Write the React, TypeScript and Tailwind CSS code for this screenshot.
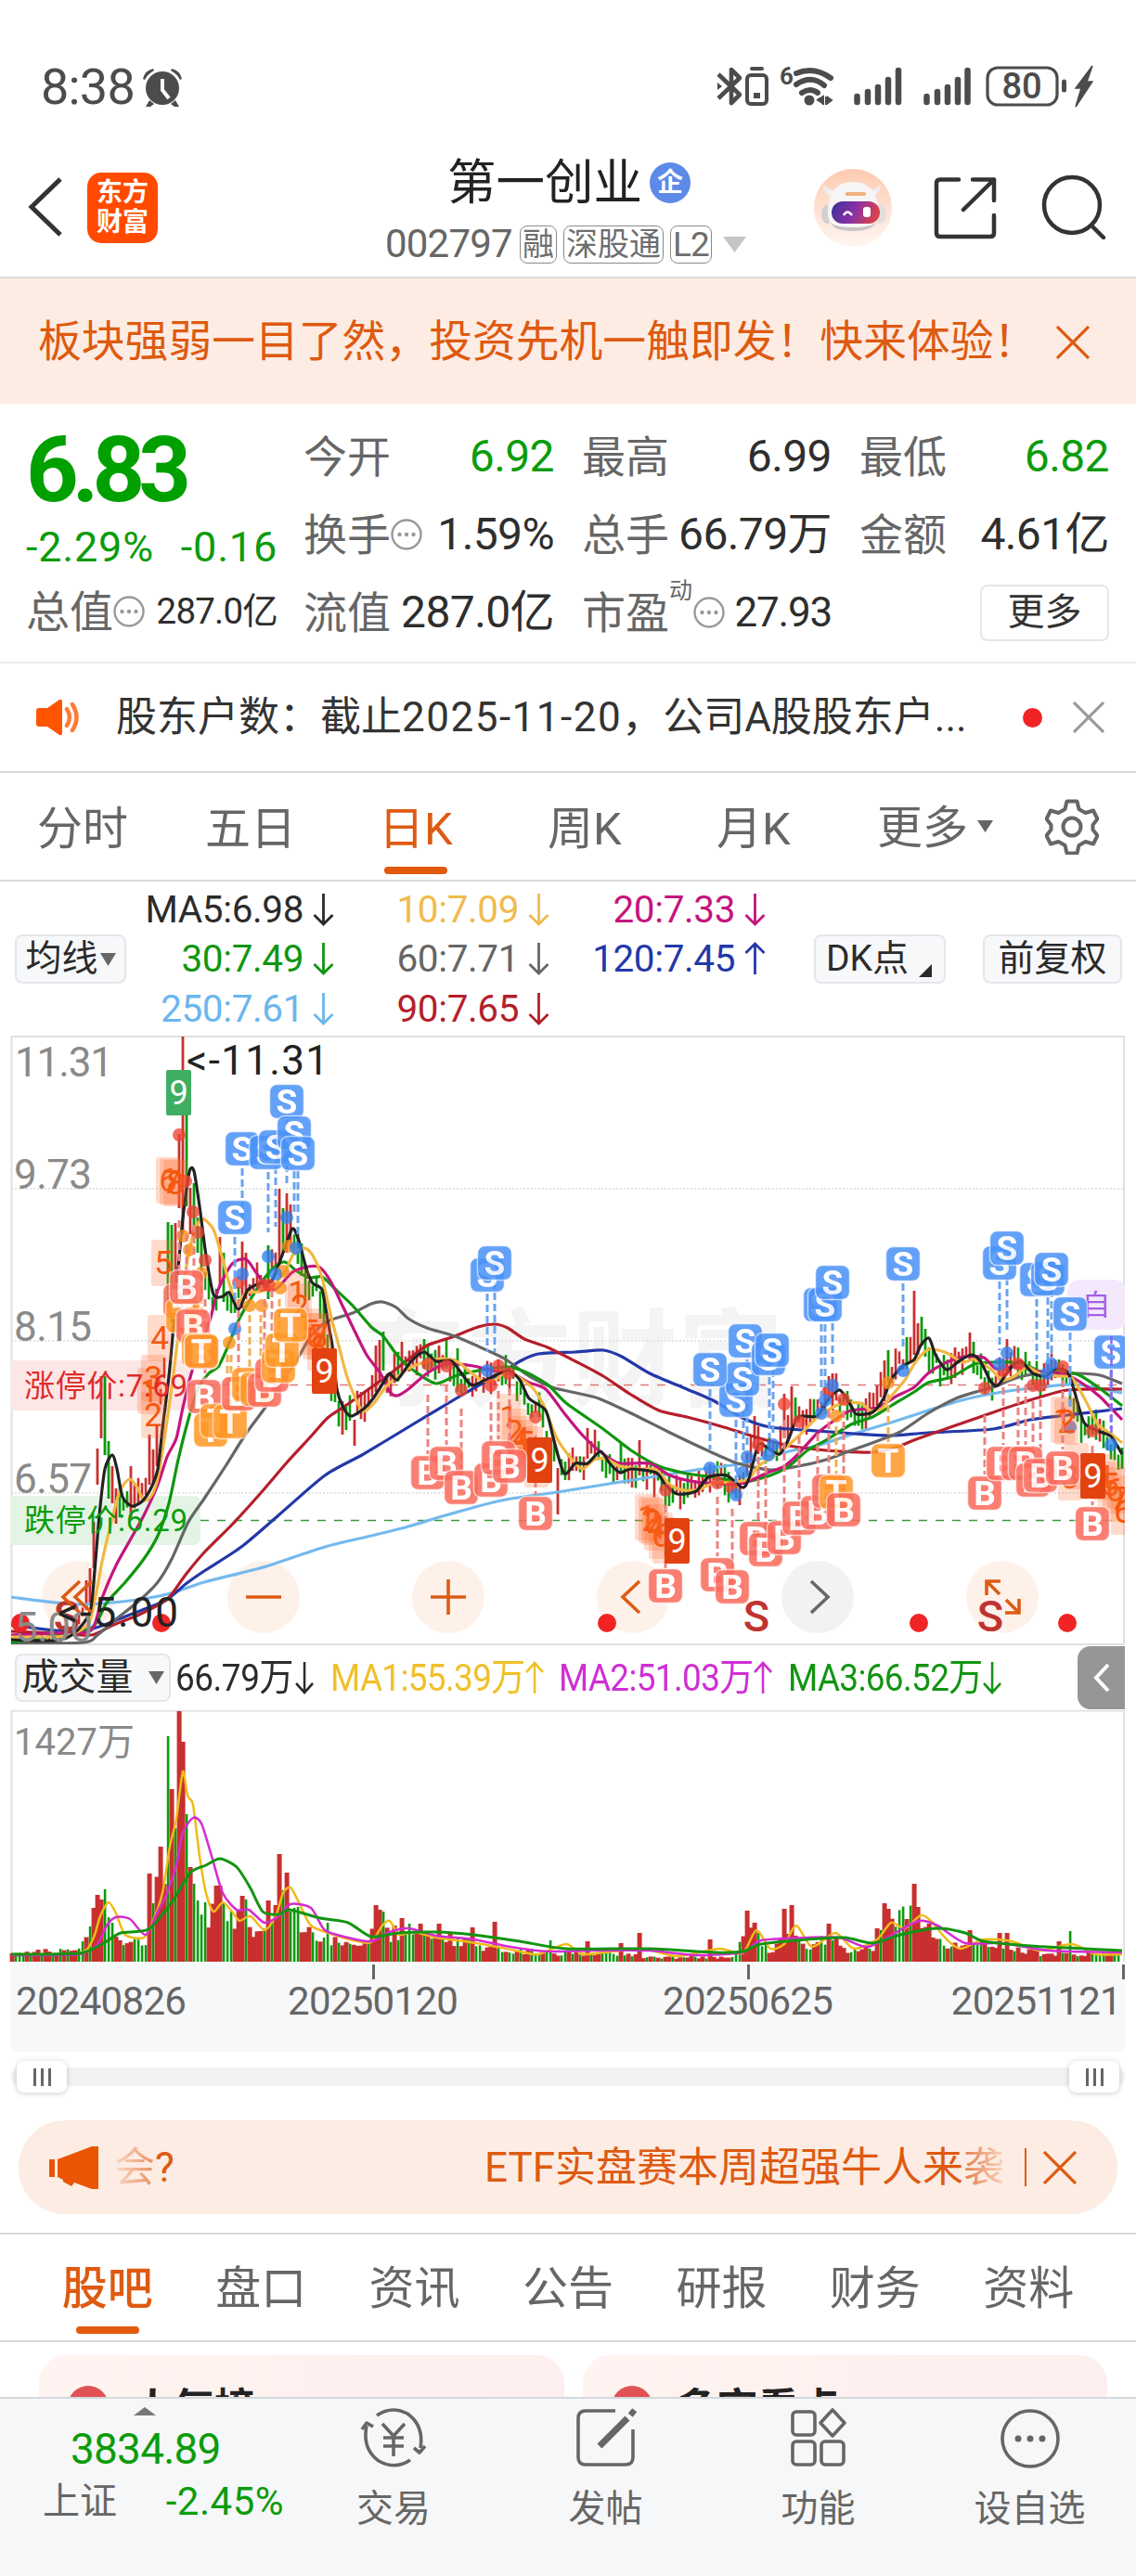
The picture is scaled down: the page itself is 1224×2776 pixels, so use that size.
import type { ReactNode } from "react";

type Point = [number, number];

interface MarkerProps {
  x: number;
  y: number;
  kind: "S" | "B" | "T";
}

const GREEN = "#0a9a0a";
const RED = "#c8302f";

const toPath = (points: Point[]) => {
  // Catmull-Rom smoothing, kept tight so that peaks stay sharp
  let d = `M${points[0][0]} ${points[0][1]}`;
  for (let i = 0; i < points.length - 1; i++) {
    const p0 = points[i - 1] ?? points[i];
    const p1 = points[i];
    const p2 = points[i + 1];
    const p3 = points[i + 2] ?? p2;
    const k = 8;
    d += ` C${p1[0] + (p2[0] - p0[0]) / k} ${p1[1] + (p2[1] - p0[1]) / k} ${
      p2[0] - (p3[0] - p1[0]) / k
    } ${p2[1] - (p3[1] - p1[1]) / k} ${p2[0]} ${p2[1]}`;
  }
  return d;
};

const valueAt = (points: Point[], x: number) => {
  for (let i = 0; i < points.length - 1; i++) {
    const [x1, y1] = points[i];
    const [x2, y2] = points[i + 1];
    if (x >= x1 && x <= x2) {
      return y1 + ((y2 - y1) * (x - x1)) / (x2 - x1 || 1);
    }
  }
  return points[points.length - 1][1];
};

const noise = (n: number) => {
  const v = Math.sin(n * 127.1 + 11.7) * 43758.5453;
  return v - Math.floor(v);
};

/* ---------- price data ---------- */

const ma5: Point[] = [
  [12, 1767], [60, 1768], [80, 1760], [97, 1737], [102, 1693], [107, 1633], [113, 1583], [121, 1568],
  [126, 1583], [132, 1613], [142, 1623], [153, 1618], [163, 1603], [170, 1583], [175, 1540], [182, 1483],
  [186, 1440], [192, 1367], [197, 1313], [204, 1263], [209, 1262], [215, 1300], [222, 1353], [230, 1395],
  [240, 1397], [247, 1393], [257, 1411], [267, 1390], [280, 1383], [293, 1380], [305, 1350], [315, 1324],
  [322, 1337], [330, 1367], [337, 1383], [347, 1390], [353, 1423], [358, 1450], [363, 1497], [370, 1517],
  [378, 1526], [392, 1518], [402, 1507], [413, 1490], [420, 1480], [428, 1487], [443, 1467], [457, 1457],
  [470, 1467], [487, 1467], [507, 1492], [523, 1487], [547, 1477], [560, 1487], [570, 1507], [588, 1520],
  [597, 1553], [608, 1588], [620, 1577], [633, 1577], [647, 1564], [657, 1577], [668, 1587], [680, 1583],
  [707, 1587], [717, 1600], [730, 1610], [750, 1607], [763, 1592], [783, 1590], [800, 1603], [807, 1593],
  [817, 1557], [827, 1560], [840, 1567], [850, 1550], [860, 1527], [880, 1526], [893, 1507], [905, 1498],
  [917, 1515], [923, 1524], [940, 1522], [952, 1507], [960, 1487], [973, 1472], [985, 1465], [992, 1450],
  [1001, 1442], [1008, 1460], [1020, 1476], [1033, 1467], [1047, 1460], [1057, 1468], [1067, 1488],
  [1075, 1493], [1090, 1473], [1100, 1467], [1113, 1480], [1127, 1483], [1137, 1475], [1150, 1478],
  [1157, 1497], [1168, 1533], [1183, 1542], [1197, 1548], [1209, 1567],
];

const ma10: Point[] = [
  [12, 1764], [70, 1763], [95, 1750], [103, 1720], [110, 1683], [120, 1640], [128, 1610], [133, 1600],
  [140, 1594], [148, 1603], [155, 1617], [163, 1612], [170, 1593], [178, 1545], [187, 1480], [193, 1430],
  [200, 1370], [208, 1330], [214, 1317], [220, 1314], [230, 1325], [238, 1350], [247, 1383], [255, 1405],
  [265, 1393], [280, 1392], [295, 1385], [307, 1370], [317, 1350], [328, 1345], [337, 1353], [347, 1377],
  [357, 1420], [365, 1450], [375, 1487], [390, 1520], [402, 1513], [417, 1493], [440, 1475], [457, 1468],
  [475, 1464], [492, 1467], [505, 1477], [520, 1488], [533, 1487], [547, 1478], [563, 1487], [575, 1497],
  [587, 1517], [600, 1550], [618, 1575], [628, 1583], [640, 1573], [653, 1572], [668, 1580], [690, 1583],
  [707, 1584], [722, 1600], [738, 1606], [753, 1605], [770, 1598], [790, 1597], [807, 1594], [817, 1580],
  [840, 1565], [860, 1548], [880, 1528], [900, 1515], [910, 1512], [927, 1512], [938, 1520], [950, 1518],
  [960, 1505], [975, 1487], [987, 1467], [1001, 1454], [1020, 1458], [1037, 1468], [1050, 1465],
  [1067, 1475], [1080, 1487], [1093, 1483], [1107, 1473], [1120, 1480], [1140, 1483], [1155, 1485],
  [1170, 1510], [1183, 1535], [1197, 1545], [1209, 1555],
];

const ma20: Point[] = [
  [12, 1762], [60, 1760], [98, 1757], [110, 1722], [125, 1687], [140, 1660], [155, 1633], [170, 1600],
  [180, 1570], [190, 1550], [197, 1517], [207, 1477], [220, 1440], [227, 1420], [235, 1390], [250, 1362],
  [265, 1357], [275, 1370], [290, 1390], [300, 1387], [315, 1371], [332, 1365], [345, 1366], [357, 1382],
  [368, 1405], [380, 1430], [395, 1460], [410, 1480], [420, 1500], [428, 1504], [440, 1497], [460, 1480],
  [480, 1470], [510, 1472], [530, 1477], [555, 1482], [570, 1490], [588, 1497], [608, 1523], [628, 1547],
  [650, 1567], [668, 1577], [700, 1577], [722, 1590], [750, 1597], [780, 1599], [802, 1598], [825, 1588],
  [845, 1580], [860, 1567], [880, 1545], [900, 1530], [917, 1520], [945, 1517], [965, 1505], [985, 1495],
  [1000, 1480], [1020, 1468], [1040, 1462], [1060, 1463], [1073, 1475], [1090, 1473], [1110, 1475],
  [1127, 1480], [1145, 1480], [1165, 1490], [1185, 1505], [1209, 1530],
];

const ma30: Point[] = [
  [12, 1770], [50, 1764], [98, 1755], [115, 1727], [135, 1705], [155, 1680], [170, 1655], [182, 1620],
  [192, 1573], [202, 1533], [213, 1497], [225, 1480], [235, 1473], [243, 1457], [257, 1423], [270, 1400],
  [283, 1380], [295, 1366], [307, 1360], [320, 1370], [333, 1377], [347, 1376], [360, 1388], [380, 1407],
  [400, 1430], [413, 1440], [430, 1463], [450, 1480], [470, 1491], [490, 1483], [510, 1478], [545, 1473],
  [565, 1478], [590, 1492], [610, 1512], [650, 1540], [680, 1563], [710, 1580], [740, 1588], [770, 1592],
  [800, 1597], [830, 1590], [850, 1580], [870, 1563], [890, 1552], [917, 1535], [940, 1527], [960, 1515],
  [985, 1500], [1000, 1490], [1025, 1484], [1050, 1470], [1070, 1468], [1090, 1468], [1110, 1473],
  [1125, 1480], [1145, 1478], [1165, 1483], [1190, 1500], [1209, 1515],
];

const ma60: Point[] = [
  [12, 1771], [90, 1770], [105, 1762], [125, 1745], [150, 1725], [170, 1705], [185, 1680], [203, 1640],
  [220, 1615], [243, 1580], [265, 1545], [287, 1515], [320, 1465], [335, 1440], [353, 1424], [380, 1415],
  [400, 1405], [412, 1403], [427, 1409], [440, 1421], [460, 1431], [490, 1440], [520, 1453], [545, 1465],
  [570, 1483], [595, 1495], [625, 1502], [645, 1507], [680, 1523], [720, 1543], [760, 1562], [795, 1577],
  [830, 1584], [860, 1580], [890, 1573], [920, 1562], [945, 1553], [970, 1543], [1000, 1523], [1030, 1507],
  [1055, 1499], [1070, 1495], [1095, 1485], [1120, 1480], [1160, 1480], [1185, 1482], [1209, 1491],
];

const ma90: Point[] = [
  [12, 1758], [60, 1760], [98, 1762], [120, 1752], [150, 1740], [175, 1727], [185, 1718], [200, 1697],
  [220, 1673], [250, 1643], [280, 1610], [310, 1575], [335, 1548], [353, 1528], [375, 1513], [400, 1495],
  [417, 1483], [440, 1465], [460, 1450], [487, 1441], [515, 1430], [533, 1427], [547, 1431], [565, 1443],
  [590, 1452], [620, 1467], [650, 1483], [680, 1503], [710, 1520], [740, 1527], [780, 1538], [815, 1549],
  [850, 1558], [880, 1562], [905, 1564], [940, 1565], [965, 1560], [990, 1550], [1050, 1529], [1100, 1512],
  [1150, 1498], [1209, 1497],
];

const ma120: Point[] = [
  [12, 1751], [60, 1757], [100, 1755], [140, 1740], [178, 1725], [200, 1707], [220, 1693], [260, 1667],
  [300, 1633], [350, 1590], [390, 1568], [420, 1550], [500, 1502], [540, 1480], [560, 1467], [580, 1459],
  [620, 1457], [650, 1455], [670, 1462], [700, 1480], [740, 1497], [770, 1510], [800, 1528], [830, 1538],
  [880, 1542], [920, 1545], [960, 1547], [1000, 1544], [1070, 1540], [1110, 1530], [1150, 1525], [1209, 1518],
];

const ma250: Point[] = [
  [12, 1721], [60, 1727], [90, 1729], [140, 1725], [180, 1718], [220, 1705], [260, 1695], [290, 1687],
  [350, 1667], [400, 1655], [440, 1645], [480, 1633], [540, 1617], [600, 1608], [650, 1600], [700, 1592],
  [750, 1584], [800, 1577], [850, 1564], [880, 1558], [920, 1545], [960, 1533], [1000, 1520], [1040, 1508],
  [1080, 1500], [1120, 1495], [1160, 1492], [1209, 1501],
];

const averages = [
  { points: ma250, color: "#74b9ee" },
  { points: ma120, color: "#2338a8" },
  { points: ma90, color: "#b41f2b" },
  { points: ma60, color: "#666666" },
  { points: ma30, color: "#0f960f" },
  { points: ma20, color: "#c4157e" },
  { points: ma10, color: "#f3b740" },
  { points: ma5, color: "#222222" },
];

// [x, high, low, colour]
const tallCandles: [number, number, number, string][] = [
  [93, 1703, 1735, RED], [97, 1690, 1730, RED], [101, 1640, 1690, RED], [105, 1561, 1600, RED],
  [109, 1483, 1550, RED], [113, 1483, 1568, GREEN], [117, 1553, 1615, GREEN], [121, 1580, 1620, RED],
  [125, 1604, 1642, RED], [141, 1580, 1635, RED], [161, 1546, 1600, RED], [165, 1562, 1598, RED],
  [169, 1537, 1580, RED], [181, 1317, 1410, GREEN], [185, 1320, 1425, GREEN], [189, 1318, 1400, RED],
  [193, 1222, 1302, RED], [197, 1117, 1330, RED], [201, 1200, 1300, GREEN], [205, 1280, 1330, RED],
  [209, 1275, 1325, GREEN], [213, 1312, 1350, GREEN], [217, 1322, 1380, GREEN], [237, 1333, 1385, RED],
  [241, 1350, 1403, GREEN], [261, 1338, 1410, RED], [265, 1350, 1400, RED], [289, 1342, 1400, GREEN],
  [301, 1281, 1360, RED], [305, 1302, 1350, GREEN], [309, 1286, 1350, RED], [313, 1298, 1345, RED],
  [321, 1330, 1362, GREEN], [325, 1340, 1375, GREEN], [349, 1385, 1450, GREEN], [369, 1510, 1546, RED],
  [382, 1530, 1558, RED], [405, 1450, 1500, RED], [409, 1444, 1490, RED], [413, 1435, 1477, GREEN],
  [433, 1446, 1480, RED], [457, 1443, 1475, GREEN], [473, 1450, 1480, RED], [493, 1453, 1500, GREEN],
  [601, 1582, 1632, RED], [633, 1539, 1572, RED], [669, 1554, 1587, GREEN], [689, 1552, 1590, RED],
  [797, 1590, 1622, RED], [813, 1526, 1560, RED], [845, 1502, 1550, RED], [853, 1494, 1540, RED],
  [857, 1506, 1530, GREEN], [893, 1483, 1510, RED], [897, 1480, 1520, RED], [945, 1493, 1515, RED],
  [953, 1466, 1510, RED], [957, 1455, 1490, GREEN], [977, 1441, 1475, GREEN], [985, 1391, 1460, RED],
  [989, 1426, 1460, RED], [993, 1419, 1450, GREEN], [997, 1432, 1462, GREEN], [1029, 1452, 1485, RED],
  [1045, 1436, 1465, RED], [1049, 1446, 1480, GREEN], [1085, 1443, 1480, RED], [1209, 1560, 1583, GREEN],
];

const candles = Array.from({ length: 299 }, (_, i) => {
  const x = 13 + i * 4;
  const lead = valueAt(ma5, Math.min(x + 6, 1209));
  const trend = lead - valueAt(ma5, Math.max(x - 6, 12));
  const quiet = x < 95;
  const length = quiet ? 5 + noise(i) * 10 : 10 + noise(i) * 24;
  const middle = lead + (noise(i + 500) - 0.5) * (quiet ? 6 : 18);
  const falling = noise(i + 900) * 16 - 8 < trend * 0.8;
  return {
    x,
    top: middle - length / 2,
    bottom: Math.min(middle + length / 2, 1770),
    color: falling ? GREEN : RED,
  };
}).filter((c) => !tallCandles.some(([x]) => Math.abs(x - c.x) < 2));

const markers: [number, number, "S" | "B" | "T"][] = [
  [253, 1312, "S"], [261, 1238, "S"], [287, 1242, "S"], [297, 1236, "S"], [309, 1187, "S"],
  [317, 1221, "S"], [321, 1243, "S"], [525, 1374, "S"], [533, 1361, "S"], [793, 1509, "S"],
  [800, 1486, "S"], [765, 1476, "S"], [803, 1445, "S"], [828, 1464, "S"], [832, 1455, "S"],
  [884, 1406, "S"], [889, 1406, "S"], [897, 1382, "S"], [973, 1362, "S"], [1077, 1361, "S"],
  [1085, 1345, "S"], [1117, 1379, "S"], [1129, 1378, "S"], [1133, 1368, "S"], [1153, 1416, "S"],
  [1197, 1457, "S"],
  [194, 1402, "B"], [197, 1418, "T"], [201, 1387, "B"], [208, 1429, "B"], [214, 1455, "T"], [217, 1457, "B"],
  [217, 1456, "T"], [220, 1505, "B"], [227, 1541, "T"], [234, 1531, "T"], [248, 1532, "T"],
  [257, 1502, "B"], [268, 1492, "T"], [277, 1497, "T"], [285, 1498, "B"], [293, 1482, "B"],
  [300, 1472, "T"], [304, 1455, "T"], [313, 1428, "T"],
  [461, 1587, "B"], [481, 1577, "B"], [497, 1603, "B"], [529, 1595, "B"], [537, 1571, "B"],
  [549, 1580, "B"], [577, 1631, "B"], [717, 1709, "B"], [773, 1697, "B"], [789, 1710, "B"],
  [815, 1658, "B"], [825, 1670, "B"], [845, 1657, "B"], [861, 1636, "B"], [881, 1630, "B"],
  [893, 1607, "B"], [901, 1608, "T"], [909, 1627, "B"], [957, 1574, "T"], [1061, 1609, "B"],
  [1081, 1577, "B"], [1097, 1577, "B"], [1105, 1577, "B"], [1113, 1595, "B"], [1121, 1590, "B"],
  [1145, 1582, "B"], [1177, 1642, "B"],
];

// dashed stem from the price up to an S badge or down to a B / T badge
const stems: [number, number, number, "S" | "B" | "T"][] = [
  [253, 1333, 1400, "S"], [261, 1259, 1325, "S"], [289, 1263, 1328, "S"], [297, 1257, 1322, "S"],
  [309, 1207, 1275, "S"], [317, 1262, 1310, "S"], [321, 1262, 1330, "S"], [525, 1394, 1457, "S"],
  [533, 1381, 1457, "S"], [765, 1497, 1562, "S"], [793, 1530, 1600, "S"], [801, 1507, 1570, "S"],
  [805, 1465, 1560, "S"], [829, 1484, 1550, "S"], [833, 1476, 1545, "S"], [885, 1427, 1510, "S"],
  [889, 1427, 1495, "S"], [897, 1402, 1470, "S"], [973, 1383, 1455, "S"], [1077, 1381, 1455, "S"],
  [1085, 1365, 1433, "S"], [1117, 1400, 1465, "S"], [1129, 1398, 1470, "S"], [1133, 1390, 1465, "S"],
  [1153, 1436, 1520, "S"], [1197, 1477, 1540, "S"],
  [193, 1315, 1370, "B"], [201, 1330, 1370, "B"], [209, 1320, 1410, "B"], [217, 1385, 1440, "T"],
  [221, 1400, 1488, "B"], [245, 1460, 1515, "T"], [249, 1460, 1515, "T"], [257, 1400, 1485, "B"],
  [269, 1417, 1475, "T"], [281, 1417, 1480, "T"], [285, 1400, 1480, "B"], [293, 1390, 1465, "B"],
  [301, 1400, 1455, "T"],
  [461, 1503, 1567, "B"], [481, 1492, 1557, "B"], [497, 1518, 1583, "B"], [529, 1511, 1575, "B"],
  [537, 1499, 1551, "B"], [549, 1496, 1560, "B"], [577, 1547, 1611, "B"], [717, 1622, 1690, "B"],
  [773, 1613, 1677, "B"], [789, 1626, 1690, "B"], [817, 1570, 1638, "B"], [825, 1580, 1650, "B"],
  [845, 1530, 1637, "B"], [861, 1548, 1616, "B"], [881, 1545, 1610, "B"], [893, 1520, 1588, "B"],
  [901, 1537, 1588, "T"], [909, 1520, 1607, "B"], [957, 1502, 1554, "T"], [1061, 1525, 1589, "B"],
  [1081, 1495, 1557, "B"], [1097, 1493, 1557, "B"], [1105, 1493, 1557, "B"], [1113, 1510, 1575, "B"],
  [1121, 1508, 1570, "B"], [1145, 1487, 1562, "B"], [1177, 1558, 1622, "B"],
];

const dots: [number, number, "S" | "B" | "T"][] = [
  [193, 1223, "B"], [200, 1273, "B"], [208, 1306, "B"], [213, 1328, "B"], [221, 1358, "B"],
  [257, 1382, "B"], [283, 1385, "B"], [290, 1385, "B"], [197, 1332, "T"], [204, 1347, "T"],
  [217, 1372, "T"], [269, 1407, "T"], [282, 1407, "T"], [302, 1388, "T"], [305, 1370, "T"],
  [247, 1447, "T"], [311, 1343, "T"], [309, 1312, "S"], [289, 1354, "S"], [261, 1373, "S"],
  [297, 1373, "S"], [319, 1345, "S"], [253, 1432, "S"], [461, 1470, "B"], [481, 1472, "B"],
  [497, 1498, "B"], [529, 1493, "B"], [537, 1472, "B"], [548, 1480, "B"], [577, 1527, "B"],
  [717, 1606, "B"], [773, 1598, "B"], [788, 1603, "B"], [525, 1477, "S"], [765, 1582, "S"],
  [793, 1611, "S"], [800, 1587, "S"], [805, 1570, "S"], [845, 1513, "B"], [817, 1557, "B"],
  [861, 1532, "B"], [892, 1500, "B"], [909, 1508, "B"], [1061, 1496, "B"], [1081, 1477, "B"],
  [1097, 1470, "B"], [1113, 1493, "B"], [1121, 1493, "B"], [1145, 1473, "B"], [1177, 1542, "B"],
  [833, 1557, "S"], [828, 1568, "S"], [885, 1523, "S"], [889, 1509, "S"], [897, 1493, "S"],
  [973, 1477, "S"], [1077, 1470, "S"], [1085, 1458, "S"], [1128, 1480, "S"], [1133, 1470, "S"],
  [1153, 1538, "S"], [1197, 1557, "S"], [901, 1526, "T"], [957, 1490, "T"],
];

// sequence counters: [centre x, centre y, digit]
const counters: [number, number, string][] = [
  [161, 1499, "1"], [165, 1525, "2"], [165, 1485, "3"], [172, 1442, "4"], [176, 1361, "5"],
  [181, 1272, "6"], [185, 1274, "7"], [189, 1275, "8"],
  [320, 1393, "1"], [323, 1408, "2"], [334, 1435, "5"], [339, 1440, "6"], [344, 1440, "7"], [344, 1452, "8"],
  [548, 1527, "1"], [554, 1543, "2"], [561, 1551, "4"], [566, 1555, "5"], [572, 1562, "6"], [578, 1578, ""],
  [697, 1635, "1"], [701, 1638, "2"], [704, 1640, "3"], [707, 1646, "4"], [712, 1655, "6"], [716, 1660, ""],
  [1145, 1530, "1"], [1149, 1532, "2"], [1153, 1592, "3"], [1160, 1580, ""], [1189, 1592, "4"],
  [1196, 1600, "5"], [1201, 1606, "6"], [1206, 1615, "7"], [1210, 1629, "6"],
];

const nines: [number, number, string][] = [
  [179, 1153, "#3fae63"], [336, 1453, "#e2420f"], [568, 1549, "#e2420f"],
  [716, 1636, "#e2420f"], [1164, 1566, "#e2420f"],
];

const markerColors = { S: "#4a92f8", B: "#fa6b5d", T: "#ff9826" };
const stemColors = { S: "#6aa3ee", B: "#ea8380", T: "#f3ae55" };
const dotColors = { S: "#2f7ff0", B: "#ee4133", T: "#fb9117" };

/* ---------- volume data ---------- */

const volumeBase: Point[] = [
  [12, 2104], [85, 2101], [95, 2085], [105, 2055], [113, 2045], [122, 2075], [135, 2092], [155, 2095],
  [165, 2055], [175, 2010], [185, 1950], [193, 1900], [198, 1900], [205, 2010], [212, 2045], [225, 2058],
  [235, 2035], [248, 2072], [262, 2050], [275, 2082], [300, 2045], [312, 2040], [325, 2076], [345, 2088],
  [375, 2093], [398, 2095], [405, 2070], [415, 2082], [450, 2080], [480, 2086], [500, 2093], [530, 2100],
  [600, 2105], [650, 2104], [700, 2109], [790, 2109], [805, 2075], [830, 2101], [855, 2080], [870, 2098],
  [893, 2085], [910, 2102], [940, 2098], [955, 2075], [985, 2060], [1000, 2080], [1020, 2098],
  [1050, 2093], [1085, 2096], [1120, 2105], [1209, 2106],
];

const volumePeaks: [number, number, string][] = [
  [101, 2056, RED], [105, 2042, RED], [109, 2047, RED], [113, 2036, GREEN], [161, 2019, RED],
  [165, 2051, GREEN], [173, 1990, RED], [177, 2030, RED], [181, 1871, GREEN], [185, 1928, RED],
  [189, 1970, GREEN], [193, 1844, RED], [197, 1877, RED], [201, 1955, GREEN], [205, 2012, RED],
  [209, 2030, GREEN], [213, 2048, GREEN], [221, 2050, GREEN], [233, 2032, RED], [237, 2032, RED],
  [241, 2050, GREEN], [261, 2043, RED], [289, 2048, RED], [297, 2053, RED], [301, 1998, RED],
  [305, 2037, GREEN], [309, 2018, RED], [313, 2060, GREEN], [353, 2072, GREEN], [405, 2053, RED],
  [409, 2058, RED], [413, 2060, GREEN], [433, 2067, RED], [473, 2073, RED], [509, 2077, RED],
  [533, 2071, RED], [593, 2091, GREEN], [633, 2092, RED], [669, 2094, RED], [689, 2083, RED],
  [765, 2090, RED], [805, 2059, RED], [813, 2072, RED], [845, 2057, RED], [853, 2053, RED],
  [893, 2073, RED], [945, 2078, RED], [953, 2051, RED], [957, 2057, RED], [977, 2068, RED],
  [985, 2030, RED], [989, 2055, RED], [1045, 2080, RED], [1077, 2083, RED], [1085, 2083, RED],
  [1141, 2092, RED], [1153, 2081, GREEN],
];

const volumes = Array.from({ length: 299 }, (_, i) => {
  const x = 13 + i * 4;
  const peak = volumePeaks.find(([px]) => Math.abs(px - x) < 2);
  if (peak) return { x, top: peak[1], color: peak[2] };
  const base = valueAt(volumeBase, x);
  const height = (2114 - base) * (0.65 + noise(i + 70) * 0.6);
  const red = noise(i + 300) > 0.5 || (x > 165 && x < 200);
  return { x, top: 2114 - height, color: red ? RED : GREEN };
});

const volumeLines: { color: string; width: number; points: Point[] }[] = [
  {
    color: "#efbb17",
    width: 2.5,
    points: [
      [12, 2106], [85, 2105], [100, 2090], [108, 2065], [117, 2050], [125, 2062], [135, 2085], [155, 2088],
      [165, 2070], [175, 2040], [183, 1990], [190, 1960], [197, 1909], [202, 1935], [208, 1945],
      [215, 2000], [222, 2040], [230, 2060], [240, 2050], [250, 2060], [258, 2070], [270, 2065],
      [285, 2080], [297, 2065], [305, 2040], [313, 2034], [322, 2050], [335, 2075], [360, 2085],
      [385, 2092], [400, 2093], [412, 2075], [420, 2070], [430, 2085], [445, 2082], [470, 2088],
      [500, 2092], [530, 2097], [560, 2103], [580, 2106], [610, 2095], [630, 2106], [690, 2100],
      [730, 2108], [775, 2100], [800, 2105], [815, 2080], [830, 2100], [845, 2095], [858, 2075],
      [875, 2098], [900, 2083], [920, 2100], [945, 2090], [960, 2072], [975, 2078], [992, 2064],
      [1003, 2070], [1020, 2090], [1035, 2100], [1060, 2090], [1090, 2092], [1120, 2102], [1155, 2095],
      [1180, 2106], [1209, 2106],
    ],
  },
  {
    color: "#d42bd4",
    width: 2.5,
    points: [
      [12, 2107], [85, 2106], [105, 2095], [115, 2075], [125, 2066], [140, 2068], [157, 2085], [170, 2060],
      [180, 2040], [190, 2010], [197, 1975], [208, 1959], [217, 1965], [228, 2000], [240, 2040],
      [255, 2058], [268, 2058], [285, 2072], [300, 2065], [313, 2052], [335, 2056], [350, 2080],
      [375, 2088], [400, 2092], [420, 2082], [440, 2078], [470, 2086], [510, 2090], [550, 2098],
      [590, 2103], [640, 2102], [700, 2102], [750, 2107], [800, 2104], [820, 2091], [870, 2088],
      [905, 2088], [935, 2098], [970, 2080], [990, 2070], [1010, 2075], [1040, 2094], [1080, 2094],
      [1130, 2102], [1209, 2104],
    ],
  },
  {
    color: "#129412",
    width: 3,
    points: [
      [12, 2106], [85, 2105], [110, 2095], [130, 2083], [160, 2079], [185, 2050], [205, 2018], [222, 2010],
      [237, 2003], [255, 2012], [270, 2035], [283, 2060], [300, 2063], [312, 2058], [345, 2067],
      [375, 2072], [400, 2087], [430, 2083], [470, 2082], [510, 2085], [560, 2092], [610, 2100],
      [700, 2100], [770, 2104], [800, 2103], [820, 2095], [870, 2090], [910, 2088], [940, 2094],
      [970, 2085], [1010, 2078], [1040, 2083], [1060, 2092], [1110, 2097], [1150, 2099], [1209, 2102],
    ],
  },
];

/* ---------- small pieces ---------- */

const Cross = ({ className }: { className: string }) => (
  <svg className={className} viewBox="0 0 36 36" fill="none" stroke="currentColor" strokeWidth="3.2">
    <path d="M1 1 35 35M35 1 1 35" />
  </svg>
);

const Arrow = ({ up = false }: { up?: boolean }) => (
  <svg className="w-[23px] h-[36px] shrink-0" viewBox="0 0 23 36" fill="none" stroke="currentColor" strokeWidth="2.8">
    {up ? <path d="M11.5 35V2M1.5 12 11.5 2l10 10" /> : <path d="M11.5 1v33M1.5 24l10 10 10-10" />}
  </svg>
);

const MoreDots = () => (
  <svg className="w-[34px] h-[34px] shrink-0 text-[#999]" viewBox="0 0 34 34" fill="none" stroke="currentColor">
    <circle cx="17" cy="17" r="15.5" strokeWidth="2.4" />
    <g fill="currentColor" stroke="none">
      <circle cx="9.5" cy="17" r="2.2" />
      <circle cx="17" cy="17" r="2.2" />
      <circle cx="24.5" cy="17" r="2.2" />
    </g>
  </svg>
);

const Triangle = ({ className }: { className: string }) => (
  <svg className={className} viewBox="0 0 20 14" preserveAspectRatio="none" fill="currentColor">
    <path d="M0 0H20L10 14Z" />
  </svg>
);

const Marker = ({ x, y, kind }: MarkerProps) => (
  <g opacity="0.86">
    <rect x={x - 18.5} y={y - 18.5} width="37" height="37" rx="8" fill={markerColors[kind]} stroke="#fff" strokeOpacity="0.7" strokeWidth="1.5" />
    <text x={x} y={y + 13} fontSize="37" fontWeight="700" fill="#fff" textAnchor="middle">
      {kind}
    </text>
  </g>
);

/* ---------- sections ---------- */

const StatusBar = () => (
  <div className="h-[132px] pt-[66px] pl-[44px] pr-[46px] flex justify-between text-[#4c4c4c]">
    <div className="flex items-center h-[56px]">
      <span className="w-[109px] text-[54px] tracking-[-0.8px]">8:38</span>
      <svg className="w-[44px] h-[44px]" viewBox="0 0 44 44" fill="currentColor">
        <circle cx="22" cy="23" r="18" />
        <path d="M1 13Q3 4 12 2L13 4Q6 8 3 14ZM43 13Q41 4 32 2L31 4Q38 8 41 14ZM8 36l5 4-4 3H4ZM36 36l-5 4 4 3h5Z" />
        <path d="M22 13v12l7 9" fill="none" stroke="#fff" strokeWidth="4" />
      </svg>
    </div>
    <svg className="w-[406px] h-[52px]" viewBox="772 66 406 52" fill="none" stroke="currentColor" strokeWidth="4">
      <path d="M774 80 797 102 788 111V75l9 9-23 22" strokeWidth="4.6" strokeLinejoin="round" />
      <path d="M773 89l5 4-5 4z" fill="currentColor" stroke="none" />
      <rect x="805" y="81" width="21" height="31" rx="4" />
      <path d="M810 74h11" strokeLinecap="round" />
      <path d="M812 103h7" strokeWidth="6" />
      <text x="840" y="91" fontSize="26" fontWeight="700" fill="currentColor" stroke="none">6</text>
      <g strokeWidth="6" strokeLinecap="round">
        <path d="M858 79Q877 71 895 84M858 91Q874 80 888 92M864 100Q873 94 881 100" />
      </g>
      <circle cx="872" cy="108" r="5.5" fill="currentColor" stroke="none" />
      <path d="M880 108l7-4v9M890 104v9M892 105l4 3-4 3z" strokeWidth="2" fill="currentColor" />
      <g strokeWidth="6.5" strokeLinecap="round">
        <path d="M923.5 104v6M935 99v11M946 94v16M957 86v24M968 76v34" />
        <path d="M998.500 104v6M1010 99v11M1021 94v16M1032 86v24M1042.500 76v34" />
      </g>
      <rect x="1064" y="73" width="75" height="40" rx="11" strokeWidth="3.2" />
      <text x="1101" y="106" fontSize="38" fontWeight="500" fill="currentColor" stroke="none" textAnchor="middle">80</text>
      <path d="M1146.500 88v9" strokeWidth="5" strokeLinecap="round" />
      <path d="M1177 71l-18 24h6l-6 20 18-27h-6z" fill="currentColor" strokeWidth="1.500" />
    </svg>
  </div>
);

const Tag = ({ children }: { children: ReactNode }) => (
  <span className="h-[41px] px-[2px] flex items-center border-[1.5px] border-[#8a8a8a] rounded-[8px] text-[34px] text-[#6e6e6e]">
    {children}
  </span>
);

const Header = () => (
  <div className="h-[168px] border-b-2 border-[#dcdcdc] flex">
    <div className="w-[415px] pt-[54px] pl-[29px] flex items-start gap-[26px]">
      <svg className="w-[39px] h-[70px] mt-[2px]" viewBox="0 0 39 70" fill="none" stroke="#333" strokeWidth="5">
        <path d="M36 5 5 35l31 30" />
      </svg>
      <div className="w-[76px] h-[76px] rounded-[15px] bg-[#ff4a00] text-white font-bold text-[28px] flex flex-col items-center justify-center gap-[4px]">
        <span>东方</span>
        <span>财富</span>
      </div>
    </div>
    <div className="w-[462px] pt-[39px]">
      <div className="h-[52px] pl-[67px] flex items-center gap-[8px]">
        <span className="text-[52.500px] text-[#222]">第一创业</span>
        <span className="w-[44px] h-[44px] rounded-full bg-[#5d8ae8] text-white text-[28px] font-bold flex items-center justify-center">
          企
        </span>
      </div>
      <div className="pt-[19px] flex items-center gap-[7px] text-[#666]">
        <span className="w-[138px] text-[42px] tracking-[-0.8px] whitespace-nowrap">002797</span>
        <Tag>融</Tag>
        <Tag>深股通</Tag>
        <Tag>
          <span className="text-[37px] tracking-[-1px]">L2</span>
        </Tag>
        <Triangle className="w-[25px] h-[17px] ml-[5px] text-[#c6c6c6]" />
      </div>
    </div>
    <div className="pt-[50px] flex items-start">
      <svg className="w-[84px] h-[84px]" viewBox="0 0 84 84">
        <defs>
          <linearGradient id="halo" x1="0" y1="0" x2="0" y2="1">
            <stop offset="0" stopColor="#fdcbb0" />
            <stop offset="1" stopColor="#fff6f2" />
          </linearGradient>
          <linearGradient id="visor" x1="0" y1="0" x2="1" y2="0.2">
            <stop offset="0" stopColor="#3b2f9c" />
            <stop offset="0.55" stopColor="#8a31a4" />
            <stop offset="1" stopColor="#d8434d" />
          </linearGradient>
        </defs>
        <circle cx="42" cy="42" r="42" fill="url(#halo)" />
        <ellipse cx="14" cy="49" rx="6" ry="10" fill="#d3cfcf" />
        <ellipse cx="72" cy="49" rx="6" ry="10" fill="#e3dfdf" />
        <path d="M10 17q0 10 12 16l8-10q-12 2-20-6zM72 17q0 10-12 16l-8-10q12 2 20-6z" fill="#f2eeee" />
        <path d="M15 48q0-34 27-34t28 34q-1 19-28 19T15 48z" fill="#f7f5f5" />
        <path d="M17 57q4 10 25 10t26-10q-6 6-26 6t-25-6z" fill="#c9c4c6" />
        <rect x="34" y="25" width="22" height="4" rx="1.500" fill="#efb27e" />
        <rect x="19" y="35" width="52" height="24" rx="12" fill="url(#visor)" />
        <path d="M32 50q4-7 9 0" fill="none" stroke="#fff" strokeWidth="2.500" />
        <rect x="53" y="41" width="8" height="11" rx="3" fill="#fff" />
      </svg>
      <svg className="w-[68px] h-[68px] ml-[45px] mt-[8px]" viewBox="0 0 68 68" fill="none" stroke="#333" strokeWidth="4.5" strokeLinecap="round" strokeLinejoin="round">
        <path d="M27 3.500H7q-4 0-4 4V61q0 4 4 4h54q4 0 4-4V42M42 3.500h23V26M65 3.500 32 36" />
      </svg>
      <svg className="w-[70px] h-[70px] ml-[48px] mt-[6px]" viewBox="0 0 70 70" fill="none" stroke="#333" strokeWidth="4.500" strokeLinecap="round">
        <circle cx="33" cy="33" r="30" />
        <path d="M54 55 67 68" />
      </svg>
    </div>
  </div>
);

const Banner = () => (
  <div className="h-[135px] bg-[#fcece3] text-[#de5a10] pt-[2px] pl-[41px] pr-[50px] flex items-center justify-between">
    <span className="text-[46.800px] whitespace-nowrap">板块强弱一目了然，投资先机一触即发！快来体验！</span>
    <Cross className="w-[36px] h-[36px]" />
  </div>
);

const Label = ({ children }: { children: ReactNode }) => (
  <span className="text-[47px] text-[#666] whitespace-nowrap">{children}</span>
);

const Value = ({ children, green = false }: { children: ReactNode; green?: boolean }) => (
  <span className={`text-[48px] tracking-[-0.6px] whitespace-nowrap ${green ? "text-[#0c9c0c]" : "text-[#2e2e2e]"}`}>
    {children}
  </span>
);

const Quote = () => (
  <div className="h-[280px] pt-[15px] pl-[28px] pr-[29px] border-b-2 border-[#ececec] flex">
    <div className="w-[299px]">
      <div className="h-[112px] pt-[1px] flex items-center">
        <span className="text-[99px] font-bold tracking-[-7px] text-[#00a000]">6.83</span>
      </div>
      <div className="h-[54px] w-[271px] flex items-center justify-between text-[45px] tracking-[0.800px] text-[#0c9c0c]">
        <span>-2.29%</span>
        <span>-0.16</span>
      </div>
      <div className="h-[86px] w-[271px] flex items-center">
        <Label>总值</Label>
        <MoreDots />
        <span className="ml-auto text-[38.500px] tracking-[-0.800px] text-[#2e2e2e] whitespace-nowrap">287.0亿</span>
      </div>
    </div>
    <div className="w-[270px] mr-[30px]">
      <div className="h-[84px] flex items-center justify-between">
        <Label>今开</Label>
        <Value green>6.92</Value>
      </div>
      <div className="h-[84px] flex items-center">
        <Label>换手</Label>
        <MoreDots />
        <span className="ml-auto"><Value>1.59%</Value></span>
      </div>
      <div className="h-[84px] flex items-center justify-between">
        <Label>流值</Label>
        <Value>287.0亿</Value>
      </div>
    </div>
    <div className="w-[269px] mr-[30px]">
      <div className="h-[84px] flex items-center justify-between">
        <Label>最高</Label>
        <Value>6.99</Value>
      </div>
      <div className="h-[84px] flex items-center justify-between">
        <Label>总手</Label>
        <Value>66.79万</Value>
      </div>
      <div className="h-[84px] flex items-center">
        <Label>市盈</Label>
        <span className="self-start pt-[6px] mr-[1px] text-[25px] text-[#666]">动</span>
        <MoreDots />
        <span className="ml-auto text-[44px] tracking-[-1.200px] text-[#2e2e2e]">27.93</span>
      </div>
    </div>
    <div className="w-[269px]">
      <div className="h-[84px] flex items-center justify-between">
        <Label>最低</Label>
        <Value green>6.82</Value>
      </div>
      <div className="h-[84px] flex items-center justify-between">
        <Label>金额</Label>
        <Value>4.61亿</Value>
      </div>
      <div className="h-[84px] flex items-center justify-end">
        <span className="w-[139px] h-[61px] border-2 border-[#e6e6e6] rounded-[8px] flex items-center justify-center text-[40px] text-[#333]">
          更多
        </span>
      </div>
    </div>
  </div>
);

const Notice = () => (
  <div className="h-[118px] pl-[38px] pr-[34px] border-b-2 border-[#d9dadb] flex items-center">
    <svg className="w-[50px] h-[40px]" viewBox="0 0 50 40" fill="#ff5500">
      <path d="M4 10h9L26 1q3-1 3 2v34q0 3-3 2L13 30H4q-3 0-3-3V13q0-3 3-3z" />
      <path d="M34 11q6 9 0 18M40 6q9 14 0 28" fill="none" stroke="#ff7a33" strokeWidth="4.500" strokeLinecap="round" />
    </svg>
    <span className="ml-[37px] w-[977px] text-[44px] text-[#333] whitespace-nowrap">
      股东户数：截止<span className="tracking-[1.500px]">2025-11-20</span>，公司A股股东户...
    </span>
    <span className="w-[21px] h-[21px] rounded-full bg-[#f02424]" />
    <Cross className="w-[34px] h-[34px] ml-auto text-[#999]" />
  </div>
);

const periodTabs = [
  { label: "分时", width: "w-[181px]" },
  { label: "五日", width: "w-[187px]" },
  { label: "日K", width: "w-[182px]", active: true },
  { label: "周K", width: "w-[182px]" },
  { label: "月K", width: "w-[173px]" },
];

const PeriodTabs = () => (
  <div className="h-[117px] pl-[40px] border-b-2 border-[#d9dadb] flex text-[49px] text-[#666]">
    {periodTabs.map((tab) => (
      <div key={tab.label} className={`${tab.width} flex`}>
        <div className={`flex flex-col items-center ${tab.active ? "text-[#de5a10]" : ""}`}>
          <span className="h-[101px] pt-[20px] flex items-center whitespace-nowrap">{tab.label}</span>
          {tab.active && <span className="w-[68px] h-[8px] rounded-full bg-[#e25a0d]" />}
        </div>
      </div>
    ))}
    <span className="pt-[4px] flex items-center whitespace-nowrap">更多</span>
    <div className="flex items-center">
      <Triangle className="w-[17px] h-[13px] ml-[10px]" />
      <svg className="w-[58px] h-[60px] ml-[56px]" viewBox="0 0 58 60" fill="none" stroke="currentColor" strokeWidth="4" strokeLinejoin="round">
        <path d="M23.500 2.500h11l2 8.500 7 4 8.500-2.500 4.500 9-5 6.500v5l5 6.500-4.500 9-8.500-2.500-7 4-2 8.500h-11l-2-8.500-7-4L6 48.500l-4.500-9 5-6.500v-5l-5-6.500 4.500-9 8.500 2.500 7-4z" />
        <circle cx="29" cy="30" r="9.500" />
      </svg>
    </div>
  </div>
);

const averageLabels = [
  { text: "MA5:6.98", color: "text-[#2b2b2b]" },
  { text: "10:7.09", color: "text-[#f0bb4d]" },
  { text: "20:7.33", color: "text-[#c4157e]" },
  { text: "30:7.49", color: "text-[#0f960f]" },
  { text: "60:7.71", color: "text-[#666]" },
  { text: "120:7.45", color: "text-[#2338a8]", up: true },
  { text: "250:7.61", color: "text-[#6cb6ee]" },
  { text: "90:7.65", color: "text-[#b41f2b]" },
];

const AverageBar = () => (
  <div className="h-[166px] pl-[16px] pr-[15px] pt-[3px] flex">
    <div className="w-[120px] pt-[54px]">
      <span className="h-[53px] border-2 border-[#e4e6ea] rounded-[8px] bg-[#f7f8fa] flex items-center justify-center gap-[2px] text-[39px] text-[#2b2b2b] whitespace-nowrap">
        均线
        <Triangle className="w-[17px] h-[14px] text-[#666]" />
      </span>
    </div>
    <div className="w-[690px] grid grid-cols-[224px_232px_233px] auto-rows-[53.500px]">
      {averageLabels.map((item) => (
        <span key={item.text} className={`flex items-center justify-end gap-[10px] text-[40.500px] tracking-[-0.400px] whitespace-nowrap ${item.color}`}>
          {item.text}
          <Arrow up={item.up} />
        </span>
      ))}
    </div>
    <div className="ml-auto pt-[54px] flex items-start gap-[40px] text-[39px] text-[#2b2b2b]">
      <span className="w-[142px] h-[53px] pl-[11px] border-2 border-[#e4e6ea] rounded-[8px] bg-[#f7f8fa] flex items-center whitespace-nowrap">
        DK点
        <svg className="w-[14px] h-[14px] ml-[11px] mt-[24px]" viewBox="0 0 14 14" fill="currentColor">
          <path d="M14 0V14H0Z" />
        </svg>
      </span>
      <span className="w-[150px] h-[53px] border-2 border-[#e4e6ea] rounded-[8px] bg-[#f7f8fa] flex items-center justify-center whitespace-nowrap">
        前复权
      </span>
    </div>
  </div>
);

const PriceChart = () => (
  <svg className="block w-[1224px] h-[657px]" viewBox="0 1116 1224 657">
    <defs>
      <clipPath id="plot">
        <rect x="12" y="1117" width="1200" height="655" />
      </clipPath>
    </defs>
    <text x="388" y="1506" fontSize="114" fontWeight="700" fill="#f4f4f4" textLength="456">东方财富</text>
    <g stroke="#dcdcdc" strokeWidth="1.500" strokeDasharray="2 2">
      <path d="M12 1281H1211M12 1445H1211M12 1609H1211" />
    </g>
    <path d="M12.500 1117H1211V1772H12.500Z" fill="none" stroke="#e0e0e0" strokeWidth="2" />
    <g clipPath="url(#plot)">
      <path d="M12 1466H196q8 0 8 8V1512q0 8-8 8H12Z" fill="#fde6e6" />
      <path d="M12 1612H208q8 0 8 8V1657q0 8-8 8H12Z" fill="#e3f4e5" />
      <path d="M204 1492.500H1211" stroke="#e47878" strokeWidth="1.600" strokeDasharray="9 9" />
      <path d="M216 1638.500H1211" stroke="#3b9a3b" strokeWidth="1.600" strokeDasharray="9 9" />

      {[84, 284, 483, 682, 881, 1080].map((cx) => (
        <circle key={cx} cx={cx} cy="1721" r="39" fill={cx === 881 ? "#f2f2f2" : "#fef1ea"} />
      ))}

      {candles.map((c) => (
        <path key={c.x} d={`M${c.x} ${c.top}V${c.bottom}`} stroke={c.color} strokeWidth="2.600" />
      ))}
      {tallCandles.map(([x, top, bottom, color]) => (
        <path key={x} d={`M${x} ${top}V${bottom}`} stroke={color} strokeWidth="2.800" />
      ))}

      {averages.map((line) => (
        <path key={line.color} d={toPath(line.points)} fill="none" stroke={line.color} strokeWidth="3.200" />
      ))}

      {dots.map(([x, y, kind], i) => (
        <circle key={i} cx={x} cy={y} r="7" fill={dotColors[kind]} opacity="0.78" />
      ))}
      {counters.map(([x, y, digit], i) => (
        <g key={i}>
          <rect x={x - 13} y={y - 25} width="26" height="50" rx="3" fill="#ff6a2a" opacity="0.24" />
          <text x={x} y={y + 12} fontSize="35" fill="#f4560c" textAnchor="middle">{digit}</text>
        </g>
      ))}
      {stems.map(([x, y1, y2, kind], i) => (
        <path key={i} d={`M${x} ${y1}V${y2}`} stroke={stemColors[kind]} strokeWidth="3" strokeDasharray="8 4" />
      ))}
      {nines.map(([x, y, color]) => (
        <g key={x}>
          <rect x={x} y={y} width="27" height="49" rx="2" fill={color} />
          <text x={x + 13.500} y={y + 37} fontSize="36" fill="#fff" textAnchor="middle">9</text>
        </g>
      ))}
      <rect x="1150" y="1379" width="64" height="54" rx="14" fill="#f4e9fc" />
      <text x="1181" y="1417" fontSize="31" fill="#a55fe6" textAnchor="middle">自</text>
      {markers.map(([x, y, kind], i) => (
        <Marker key={i} x={x} y={y} kind={kind} />
      ))}
      <path d="M1197.500 1440V1545" stroke="#8866f0" strokeWidth="2.500" strokeDasharray="8 4" />

      {[22, 174, 654, 990, 1150].map((cx) => (
        <circle key={cx} cx={cx} cy="1749" r="10" fill="#f02424" />
      ))}
      <g fontSize="47" fontWeight="500" fill="#bf3330" textAnchor="middle">
        <text x="72" y="1758">S</text>
        <text x="815" y="1758">S</text>
        <text x="1067" y="1758">S</text>
      </g>

      <g fill="none" stroke="#dc5c14" strokeWidth="3.600">
        <path d="M86 1704 68 1721l18 17M99 1704 81 1721l18 17" />
        <path d="M265 1721h38M464 1721h38M483 1702v38" />
        <path d="M689 1704l-18 17 18 17" />
        <path d="M1078 1704h-15v15M1063 1704l14 14M1083 1738h15v-15M1098 1738l-14-14" />
        <path d="M874 1704l18 17-18 17" stroke="#666" />
      </g>

      <g fontSize="44" fill="#8a8a8a">
        <text x="16" y="1160" textLength="106">11.31</text>
        <text x="15" y="1281" textLength="84">9.73</text>
        <text x="15" y="1445" textLength="84">8.15</text>
        <text x="15" y="1609" textLength="84">6.57</text>
        <text x="16" y="1769" textLength="84">5.00</text>
      </g>
      <g fontSize="44" fill="#222">
        <text x="201" y="1158" textLength="153">&lt;-11.31</text>
        <text x="62" y="1753" textLength="130">&lt;-5.00</text>
      </g>
      <text x="26" y="1505" fontSize="33" fill="#e02b2b" textLength="176">涨停价:7.69</text>
      <text x="26" y="1650" fontSize="33" fill="#0c9c0c" textLength="176">跌停价:6.29</text>
    </g>
  </svg>
);

const volumeLabels = [
  { text: "MA1:55.39万", color: "text-[#efc02a]", up: true },
  { text: "MA2:51.03万", color: "text-[#cf2fd4]", up: true },
  { text: "MA3:66.52万", color: "text-[#129412]", up: false },
];

// The figures in this bar are set slightly condensed
const VolumeBar = () => (
  <div className="h-[70px] pl-[16px] pr-[12px] flex items-center text-[41px] text-[#2b2b2b] whitespace-nowrap">
    <span className="w-[168px] h-[52px] shrink-0 border-2 border-[#e4e6ea] rounded-[8px] bg-[#f7f8fa] flex items-center justify-center gap-[16px] text-[40px]">
      成交量
      <Triangle className="w-[17px] h-[14px] text-[#666]" />
    </span>
    <div className="w-[154px] shrink-0 pl-[5px]">
      <span className="w-[166px] flex items-center justify-between origin-left scale-x-90 tracking-[-0.500px]">
        66.79万
        <Arrow />
      </span>
    </div>
    {volumeLabels.map((item) => (
      <div key={item.text} className="w-[229px] ml-[17.500px] shrink-0">
        <span className={`w-[256px] flex items-center justify-between origin-left scale-x-90 tracking-[-0.700px] ${item.color}`}>
          {item.text}
          <Arrow up={item.up} />
        </span>
      </div>
    ))}
    <span className="w-[51px] h-[68px] ml-auto rounded-l-[14px] bg-[#969696] flex items-center justify-center">
      <svg className="w-[18px] h-[32px]" viewBox="0 0 18 32" fill="none" stroke="#fff" strokeWidth="4">
        <path d="M16 2 3 16l13 14" />
      </svg>
    </span>
  </div>
);

const VolumeChart = () => (
  <svg className="block w-[1224px] h-[271px]" viewBox="0 1843 1224 271">
    <path d="M12.500 2114V1843.500H1211V2114" fill="none" stroke="#e0e0e0" strokeWidth="2" />
    {volumes.map((bar) => (
      <rect
        key={bar.x}
        x={bar.color === RED ? bar.x - 2.400 : bar.x - 1.200}
        y={bar.top}
        width={bar.color === RED ? 5 : 2.600}
        height={2114 - bar.top}
        fill={bar.color}
      />
    ))}
    {volumeLines.map((line) => (
      <path key={line.color} d={toPath(line.points)} fill="none" stroke={line.color} strokeWidth={line.width} />
    ))}
    <text x="15" y="1891" fontSize="40" fill="#8a8a8a" textLength="130">1427万</text>
  </svg>
);

const DateAxis = () => (
  <div className="h-[97px] mx-[12px] bg-[#f7f8fa] text-[42px] text-[#666] tracking-[-0.700px]">
    <div className="h-[19px] pt-[3px] grid grid-cols-[389px_404px_404px_1fr]">
      <span />
      <span className="border-l-[3px] border-[#666]" />
      <span className="border-l-[3px] border-[#666]" />
      <span className="border-l-[3px] border-[#666]" />
    </div>
    <div className="h-[48px] pl-[5px] pr-[4px] flex items-center">
      <span className="w-[293px]">20240826</span>
      <span className="w-[404px]">20250120</span>
      <span>20250625</span>
      <span className="ml-auto">20251121</span>
    </div>
  </div>
);

const Handle = () => (
  <span className="w-[54px] h-[34px] rounded-[8px] bg-white shadow-[0_1px_6px_rgba(0,0,0,0.2)] flex items-center justify-center gap-[5px]">
    <span className="w-[3px] h-[19px] bg-[#666]" />
    <span className="w-[3px] h-[19px] bg-[#666]" />
    <span className="w-[3px] h-[19px] bg-[#666]" />
  </span>
);

const RangeSlider = () => (
  <div className="h-[74px] pt-[17px] px-[12px]">
    <div className="h-[20px] px-[6px] rounded-full bg-[#f1f2f4] flex items-center justify-between">
      <Handle />
      <Handle />
    </div>
  </div>
);

const Promo = () => (
  <div className="h-[121px] px-[20px]">
    <div className="h-[101px] rounded-[50px] bg-[#fcece3] text-[#de5a10] pl-[33px] pr-[44px] flex items-center text-[44px] whitespace-nowrap">
      <svg className="w-[53px] h-[46px]" viewBox="0 0 53 46" fill="#ea5504">
        <path d="M0 14h6v19H0zM9 14 46 0h7v46h-7l-19-7-3 4-9-5v-2l-6-3z" />
      </svg>
      <span className="ml-[17px]">
        <span className="bg-gradient-to-r from-[#f9dac9] to-[#e88d5b] bg-clip-text text-transparent">会</span>?
      </span>
      <span className="ml-auto">
        ETF实盘赛本周超强牛人来
        <span className="bg-gradient-to-r from-[#e07b42] to-[#f9d5c1] bg-clip-text text-transparent">袭</span>
      </span>
      <span className="w-[2px] h-[41px] ml-[22px] bg-[#de5a10]" />
      <Cross className="w-[36px] h-[36px] ml-[18px]" />
    </div>
  </div>
);

const sections = ["股吧", "盘口", "资讯", "公告", "研报", "财务", "资料"];

const SectionTabs = () => (
  <div className="h-[118px] px-[33px] border-y-2 border-[#d4d8dc] grid grid-cols-7 text-[49px] text-[#666]">
    {sections.map((name, i) => (
      <div key={name} className={`flex flex-col items-center ${i === 0 ? "text-[#de5a10] font-medium" : ""}`}>
        <span className="h-[99px] pt-[34px]">{name}</span>
        {i === 0 && <span className="w-[68px] h-[8px] rounded-full bg-[#e25a0d]" />}
      </div>
    ))}
  </div>
);

const Cards = () => (
  <div className="h-[59px] pt-[14px] pl-[42px] pr-[31px] overflow-hidden grid grid-cols-2 gap-[20px]">
    {["人气榜", "多空看点"].map((title) => (
      <div key={title} className="h-[120px] pt-[28px] pl-[31px] rounded-[30px] bg-gradient-to-r from-[#fff4f1] to-[#fdefee] flex items-start gap-[26px]">
        <span className="w-[44px] h-[44px] mt-[5px] rounded-full bg-[#df5353]" />
        <span className="pt-[8px] text-[44px] font-bold text-[#222]">{title}</span>
      </div>
    ))}
  </div>
);

const NavItem = ({ label, children }: { label: string; children: ReactNode }) => (
  <div className="flex flex-col items-center">
    <svg className="w-[76px] h-[66px] mt-[9px]" viewBox="0 0 76 66" fill="none" stroke="currentColor" strokeWidth="3.600" strokeLinejoin="round">
      {children}
    </svg>
    <span className="pt-[24px] text-[40px]">{label}</span>
  </div>
);

const BottomNav = () => (
  <div className="h-[193px] border-t-2 border-[#d4d8dc] bg-[#f6f7f9] text-[#666] grid grid-cols-[310px_228px_229px_229px_227px]">
    <div className="pt-[9px] pl-[46px] flex flex-col items-start">
      <Triangle className="w-[24px] h-[9px] ml-[98px] rotate-180 text-[#777]" />
      <span className="h-[72px] pt-[13px] pl-[30px] text-[46px] tracking-[-0.800px] text-[#0c9c0c]">3834.89</span>
      <div className="w-[260px] h-[42px] flex items-center justify-between">
        <span className="text-[40px]">上证</span>
        <span className="text-[42px] tracking-[0.500px] text-[#0c9c0c]">-2.45%</span>
      </div>
    </div>
    <NavItem label="交易">
      <path d="M20 9Q36-2 53 7 71 20 67 44M56 57Q40 68 22 58 4 45 9 20M4 24 9 17l7 4M72 42l-6 7-6-5" />
      <path d="M26 18 38 31 50 18M38 31v22M27 33h22M27 42h22" />
    </NavItem>
    <NavItem label="发帖">
      <path d="M48 4H16q-8 0-8 8V54q0 8 8 8H59q8 0 8-8V24" />
      <path d="M64 4l5 4M61 12 31 42" strokeWidth="7" />
    </NavItem>
    <NavItem label="功能">
      <rect x="10" y="5" width="24" height="25" rx="4" />
      <rect x="10" y="37" width="24" height="25" rx="4" />
      <rect x="41" y="37" width="24" height="25" rx="4" />
      <path d="M53 3 66 17 53 31 40 17Z" />
    </NavItem>
    <NavItem label="设自选">
      <circle cx="38" cy="34" r="30" />
      <g fill="currentColor" stroke="none">
        <circle cx="25" cy="34" r="3.500" />
        <circle cx="38" cy="34" r="3.500" />
        <circle cx="51" cy="34" r="3.500" />
      </g>
    </NavItem>
  </div>
);

export default function App() {
  return (
    <div className="w-[1224px] h-[2776px] overflow-hidden bg-white leading-none font-[Roboto,'Noto_Sans_CJK_SC',sans-serif]">
      <StatusBar />
      <Header />
      <Banner />
      <Quote />
      <Notice />
      <PeriodTabs />
      <AverageBar />
      <PriceChart />
      <VolumeBar />
      <VolumeChart />
      <DateAxis />
      <RangeSlider />
      <Promo />
      <SectionTabs />
      <Cards />
      <BottomNav />
    </div>
  );
}
